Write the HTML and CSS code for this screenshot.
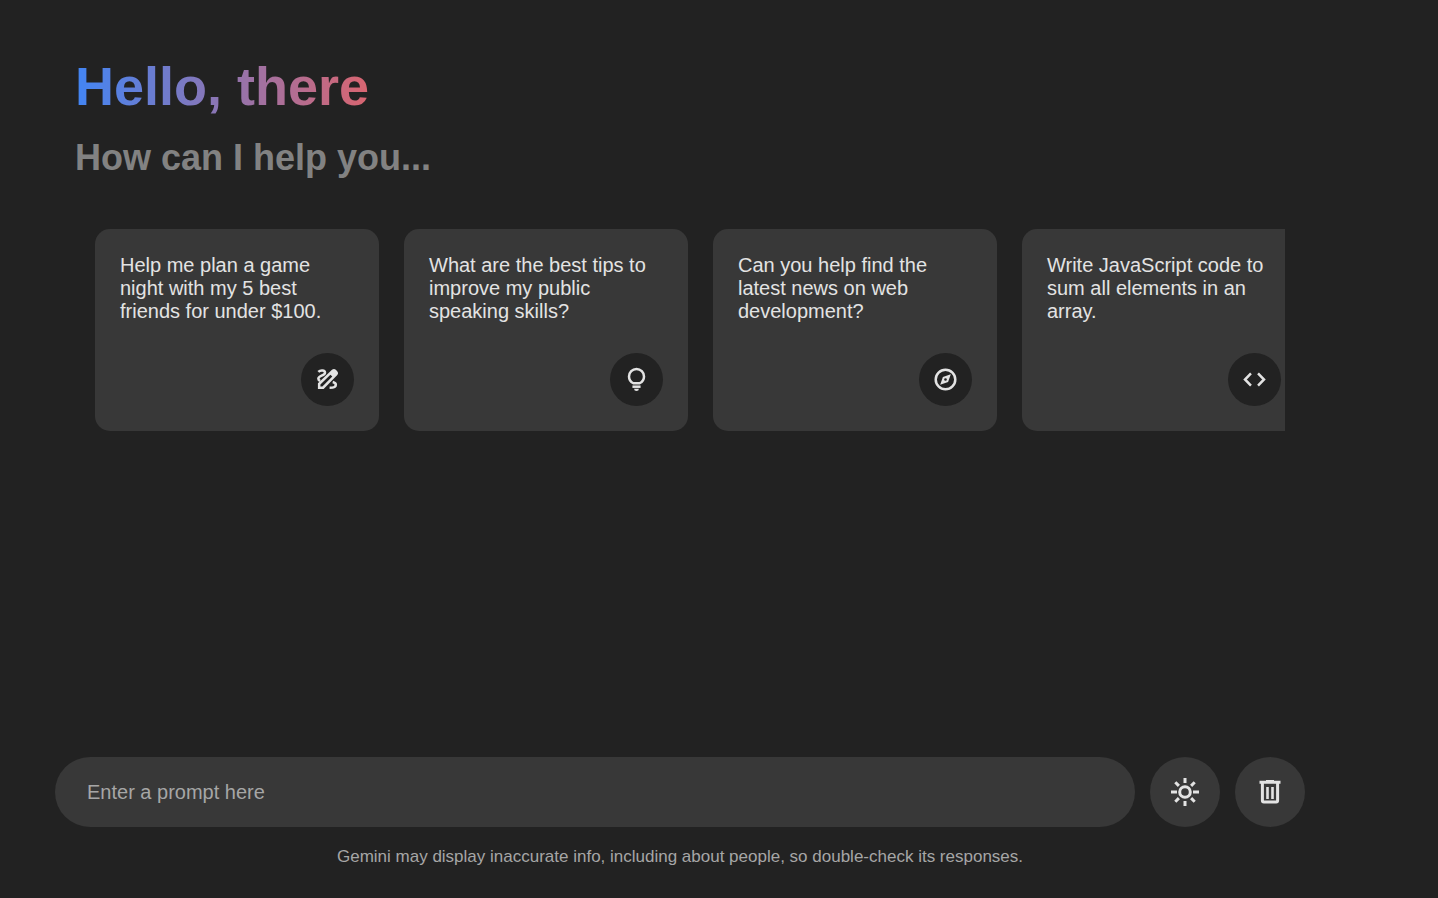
FILE: index.html
```html
<!DOCTYPE html>
<html lang="en">
<head>
<meta charset="utf-8">
<meta name="viewport" content="width=device-width, initial-scale=1">
<title>Hello, there</title>
<link rel="stylesheet" href="styles.css">
</head>
<body>
<div class="app">
  <header class="header">
    <h1 class="title">Hello, there</h1>
    <p class="subtitle">How can I help you...</p>
    <ul class="suggestions">
      <li class="suggestion">
        <p class="suggestion-text">Help me plan a game night with my 5 best friends for under $100.</p>
        <span class="badge"><svg class="icon" viewBox="0 0 24 24" aria-hidden="true"><path fill="currentColor" fill-rule="evenodd" d="M21.4 7.6 8.3 21.2H2.8V15.6L16.3 2.7c1.2-1.1 2.6-1.1 3.7 0l1.3 1.3c1.1 1.1 1.1 2.5.1 3.6zM5.2 16.9V18.8H7.1L16.6 9.2 14.8 7.4z"/><g class="line"><path d="M3.2 4.6C5.2 2.6 9.6 2.8 9.6 5.4c0 2.9-6.4 3-6.4 5.8 0 1.1.8 1.7 1.9 2.1M17 14.4c2 .5 3 1.4 3 2.6 0 1.9-2.4 3-6 3"/></g></svg></span>
      </li>
      <li class="suggestion">
        <p class="suggestion-text">What are the best tips to improve my public speaking skills?</p>
        <span class="badge"><svg class="icon" viewBox="0 0 24 24" aria-hidden="true"><g class="line"><path d="M9 15.6C6.8 14.4 4.8 12.2 4.8 9a7.2 7.2 0 0 1 14.4 0c0 3.2-2 5.4-4.2 6.6z"/><path d="M8.1 18.9h7.8"/></g><path fill="currentColor" d="M9.7 20.8h4.6a2.3 2.3 0 0 1-4.6 0z"/></svg></span>
      </li>
      <li class="suggestion">
        <p class="suggestion-text">Can you help find the latest news on web development?</p>
        <span class="badge"><svg class="icon" viewBox="0 0 24 24" aria-hidden="true"><circle class="line" cx="12" cy="12" r="9.4"/><path fill="currentColor" fill-rule="evenodd" d="m6.9 17.1 2.6-7.6 7.6-2.6-2.6 7.6zM12 10.7a1.3 1.3 0 1 0 0 2.6 1.3 1.3 0 0 0 0-2.6z"/></svg></span>
      </li>
      <li class="suggestion">
        <p class="suggestion-text">Write JavaScript code to sum all elements in an array.</p>
        <span class="badge"><svg class="icon" viewBox="0 0 24 24" aria-hidden="true"><path class="line" d="M8.6 6.2 2.9 12l5.7 5.8M15.4 6.2l5.7 5.8-5.7 5.8"/></svg></span>
      </li>
    </ul>
  </header>
  <footer class="footer">
    <form class="composer">
      <input class="prompt" type="text" placeholder="Enter a prompt here" aria-label="Enter a prompt here">
      <button class="action" type="button" aria-label="Toggle theme"><svg class="icon-large" viewBox="0 0 30 30" aria-hidden="true"><g class="line"><circle cx="15" cy="15" r="5.3"/><path d="M15 1v5M15 24v5M1 15h6M23 15h6M5.3 5.3l3.6 3.6M21.1 21.1l3.6 3.6M5.3 24.7l3.6-3.6M21.1 8.9l3.6-3.6"/></g></svg></button>
      <button class="action" type="button" aria-label="Delete chat"><svg class="icon-large" viewBox="0 0 30 30" aria-hidden="true"><g class="line"><path d="M4.5 5.3h21M11 4.6h8M7.4 5.3v18.2c0 .9.5 1.4 1.4 1.4h12.4c.9 0 1.4-.5 1.4-1.4V5.3"/></g><path class="bars" d="M12.5 10v12M17.5 10v12"/></svg></button>
    </form>
    <p class="disclaimer">Gemini may display inaccurate info, including about people, so double-check its responses.</p>
  </footer>
</div>
</body>
</html>
```
FILE: styles.css
```css
* {
  box-sizing: border-box;
  margin: 0;
  padding: 0;
}

body {
  background: #222;
  color: #e3e3e3;
  font-family: "Liberation Sans", Arial, sans-serif;
}

.app {
  display: flex;
  flex-direction: column;
  justify-content: space-between;
  min-height: 100vh;
  max-width: 1305px;
  padding: 54px 0 31px 55px;
}

.header {
  padding: 0 20px;
}

.title {
  width: fit-content;
  font-size: 54px;
  line-height: 64px;
  color: transparent;
  background: linear-gradient(to right, #4285f4, #d96570);
  background-clip: text;
  -webkit-background-clip: text;
}

.subtitle {
  margin-top: 19px;
  font-size: 36px;
  font-weight: bold;
  line-height: 42px;
  color: #828282;
}

.suggestions {
  display: flex;
  gap: 25px;
  margin: 50px 0 0 20px;
  overflow: hidden;
  list-style: none;
}

.suggestion {
  display: flex;
  flex: 0 0 284px;
  flex-direction: column;
  align-items: flex-end;
  justify-content: space-between;
  min-height: 202px;
  padding: 25px;
  border-radius: 15px;
  background: #383838;
}

.suggestion-text {
  width: 100%;
  font-size: 20px;
  line-height: 23px;
}

.badge {
  display: grid;
  place-items: center;
  width: 53px;
  height: 53px;
  border-radius: 50%;
  background: #222;
}

.icon {
  width: 25px;
  height: 25px;
}

.icon-large {
  width: 30px;
  height: 30px;
}

.line {
  fill: none;
  stroke: currentColor;
  stroke-width: 2.4;
}

.icon-large .line {
  stroke-width: 3;
}

.bars {
  fill: none;
  stroke: currentColor;
  stroke-width: 2.6;
}

.composer {
  display: flex;
  gap: 15px;
}

.prompt {
  flex: 1;
  min-width: 0;
  height: 70px;
  padding: 0 32px;
  border: 0;
  border-radius: 35px;
  background: #383838;
  color: #e3e3e3;
  font: 20px "Liberation Sans", Arial, sans-serif;
}

.prompt::placeholder {
  color: #a6a6a6;
}

.action {
  display: grid;
  flex: 0 0 70px;
  place-items: center;
  height: 70px;
  border: 0;
  border-radius: 50%;
  background: #383838;
  color: #e3e3e3;
  cursor: pointer;
}

.disclaimer {
  margin-top: 20px;
  font-size: 17px;
  line-height: 20px;
  text-align: center;
  color: #a6a6a6;
}
```
